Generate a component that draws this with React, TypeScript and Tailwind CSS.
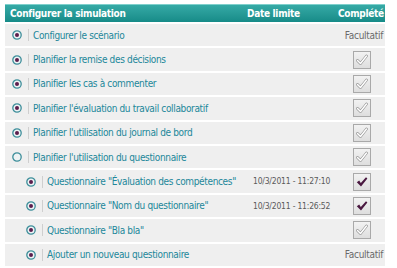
import React from "react";

type Row = {
    label: string;
    indent?: boolean;
    empty?: boolean;
    date?: string;
    status: "optional" | "unchecked" | "checked";
};

const rows: Row[] = [
    { label: "Configurer le scénario", status: "optional" },
    { label: "Planifier la remise des décisions", status: "unchecked" },
    { label: "Planifier les cas à commenter", status: "unchecked" },
    { label: "Planifier l'évaluation du travail collaboratif", status: "unchecked" },
    { label: "Planifier l'utilisation du journal de bord", status: "unchecked" },
    { label: "Planifier l'utilisation du questionnaire", empty: true, status: "unchecked" },
    {
        label: "Questionnaire \"Évaluation des compétences\"",
        indent: true,
        date: "10/3/2011 - 11:27:10",
        status: "checked",
    },
    {
        label: "Questionnaire \"Nom du questionnaire\"",
        indent: true,
        date: "10/3/2011 - 11:26:52",
        status: "checked",
    },
    { label: "Questionnaire \"Bla bla\"", indent: true, status: "unchecked" },
    { label: "Ajouter un nouveau questionnaire", indent: true, status: "optional" },
];

const Radio = ({ empty }: { empty?: boolean }) => (
    <svg width="10" height="10" viewBox="0 0 10 10" className="shrink-0">
        <circle cx="5" cy="5" r="4.2" fill="#eef3f4" stroke="#3d8e9a" strokeWidth="1.3" />
        {!empty && <circle cx="5" cy="5" r="2" fill="#5b1d4c" />}
    </svg>
);

const Check = ({ checked }: { checked: boolean }) => (
    <div className="w-[18px] h-[18px] border border-[#a9a9a9] bg-gradient-to-b from-[#f2f2f2] to-[#dedede] flex items-center justify-center">
        {checked ? (
            <svg width="14" height="14" viewBox="0 0 14 14">
                <path d="M1.8 7.2 L4.2 5.6 L5.8 8 L11 2.2 L12.4 3.6 L6 11.6 Z" fill="#4a1840" />
            </svg>
        ) : (
            <svg width="14" height="14" viewBox="0 0 14 14">
                <path
                    d="M2.5 7.5 L5.5 10.5 L11.5 3"
                    fill="none"
                    stroke="#8f8f8f"
                    strokeWidth="2.8"
                    strokeLinecap="round"
                    strokeLinejoin="round"
                />
                <path
                    d="M2.5 7.5 L5.5 10.5 L11.5 3"
                    fill="none"
                    stroke="#ffffff"
                    strokeWidth="1.5"
                    strokeLinecap="round"
                    strokeLinejoin="round"
                />
            </svg>
        )}
    </div>
);

const App = () => {
    return (
        <div
            className="w-[397px] h-[268px] bg-white pt-[4px] pl-[5px]"
            style={{ fontFamily: "'DejaVu Sans Condensed', 'DejaVu Sans', sans-serif" }}
        >
            <div className="w-[380px] flex flex-col gap-[2px]">
                <div className="flex items-center h-[18px] border-t border-[#7fd0cc] bg-gradient-to-b from-[#35aaa6] to-[#168b88] text-white font-bold text-[10px] tracking-[-0.3px]">
                    <div className="flex-1 pl-[5px]">Configurer la simulation</div>
                    <div className="w-[91px]">Date limite</div>
                    <div className="w-[47px] text-right pr-[2px] whitespace-nowrap">Complété</div>
                </div>
                {rows.map((row) => (
                    <div key={row.label} className="flex items-center h-[22.4px] bg-[#efefef]">
                        <div
                            className={
                                row.indent
                                    ? "flex-1 flex items-center pl-[21px]"
                                    : "flex-1 flex items-center pl-[7px]"
                            }
                        >
                            <Radio empty={row.empty} />
                            <span className="w-px h-[12px] bg-[#cfcfcf] ml-[6px] mr-[4px]" />
                            <span className="text-[10px] tracking-[-0.35px] text-[#22879a] whitespace-nowrap">
                                {row.label}
                            </span>
                        </div>
                        <div className="w-[91px] pl-[6px] text-[8.5px] tracking-[-0.2px] text-[#5a5a5a] whitespace-nowrap">
                            {row.date}
                        </div>
                        <div className="w-[47px] flex justify-center">
                            {row.status === "optional" ? (
                                <span className="w-full text-right pr-[2px] text-[10px] tracking-[-0.3px] text-[#6a6a6a]">
                                    Facultatif
                                </span>
                            ) : (
                                <Check checked={row.status === "checked"} />
                            )}
                        </div>
                    </div>
                ))}
            </div>
        </div>
    );
};

export default App;
